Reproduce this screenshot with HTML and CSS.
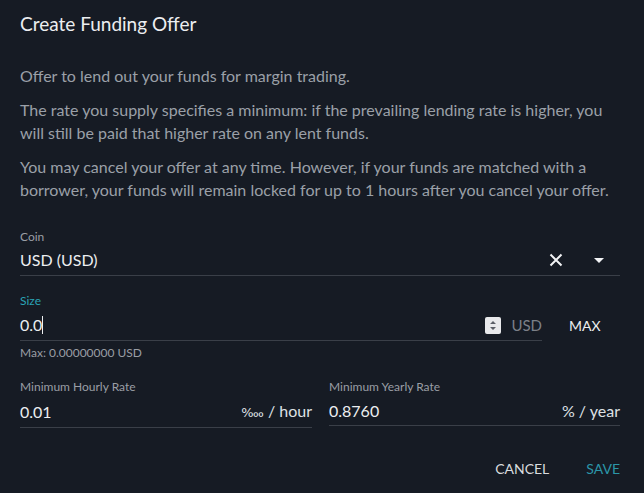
FILE: index.html
```html
<!DOCTYPE html>
<html>
<head>
<meta charset="utf-8">
<link rel="stylesheet" href="styles.css">
</head>
<body>
<div class="dialog">
  <h1 class="title">Create Funding Offer</h1>
  <div class="desc">
    <p>Offer to lend out your funds for margin trading.</p>
    <p>The rate you supply specifies a minimum: if the prevailing lending rate is higher, you will still be paid that higher rate on any lent funds.</p>
    <p>You may cancel your offer at any time. However, if your funds are matched with a borrower, your funds will remain locked for up to 1 hours after you cancel your offer.</p>
  </div>

  <div class="field coin">
    <div class="label">Coin</div>
    <div class="input">
      <span class="value">USD (USD)</span>
      <span class="icons">
        <svg class="clear" width="14" height="14" viewBox="0 0 14 14"><path d="M1.5 1.5L12.5 12.5M12.5 1.5L1.5 12.5" stroke="#f2f3f5" stroke-width="2" fill="none"/></svg>
        <svg class="caret" width="10" height="5" viewBox="0 0 10 5"><path d="M0 0H10L5 5Z" fill="#f2f3f5"/></svg>
      </span>
    </div>
  </div>

  <div class="size-row">
    <div class="field size">
      <div class="label active">Size</div>
      <div class="input">
        <span class="value">0.0<span class="cursor"></span></span>
        <span class="adorn">
          <svg class="spin" width="16" height="17" viewBox="0 0 16 17"><rect x="0" y="0" width="16" height="17" rx="2" fill="#e8e9eb"/><path d="M5 7L8 4L11 7Z M5 10L8 13L11 10Z" fill="#5a5e66"/></svg>
          <span class="unit">USD</span>
        </span>
      </div>
    </div>
    <button class="max">MAX</button>
  </div>
  <div class="hint">Max: 0.00000000 USD</div>

  <div class="rates">
    <div class="field">
      <div class="label">Minimum Hourly Rate</div>
      <div class="input">
        <span class="value">0.01</span>
        <span class="suffix"><span class="permyr">‱</span> / hour</span>
      </div>
    </div>
    <div class="field">
      <div class="label">Minimum Yearly Rate</div>
      <div class="input">
        <span class="value">0.8760</span>
        <span class="suffix">% / year</span>
      </div>
    </div>
  </div>

  <div class="actions">
    <button class="btn cancel">CANCEL</button>
    <button class="btn save">SAVE</button>
  </div>
</div>
</body>
</html>
```

FILE: styles.css
```css
html, body {
  margin: 0;
  padding: 0;
  background: #161b24;
  height: 100%;
}
body {
  font-family: Lato, "Noto Sans", sans-serif;
  color: #e6e8eb;
}
.dialog {
  padding: 12px 24px 0 20px;
}
.title {
  margin: 0;
  font-size: 19px;
  font-weight: 400;
  line-height: 24px;
  color: #eceef0;
}
.desc {
  margin-top: 28px;
}
.desc p {
  margin: 0 0 11px 0;
  font-size: 16px;
  line-height: 23px;
  color: #9ba0a8;
}
.desc p:last-child {
  margin-bottom: 0;
}
.field {
  display: flex;
  flex-direction: column;
}
.label {
  font-size: 12px;
  line-height: 16px;
  color: #9a9ea5;
}
.label.active {
  color: #2aa3b5;
}
.input {
  display: flex;
  align-items: center;
  justify-content: space-between;
  border-bottom: 1px solid #3a3f48;
  font-size: 16px;
  line-height: 22px;
  padding: 0 0 4px 0;
  color: #eceef0;
}
.coin {
  margin-top: 28px;
}
.coin .label {
  margin-bottom: 4px;
}
.icons {
  display: flex;
  align-items: center;
  gap: 31px;
  padding-right: 16px;
}
.size-row {
  display: flex;
  align-items: flex-end;
  margin-top: 17px;
}
.size {
  width: 522px;
}
.size .label {
  margin-bottom: 5px;
}
.cursor {
  display: inline-block;
  width: 1px;
  height: 18px;
  background: #eceef0;
  vertical-align: -3px;
}
.adorn {
  display: flex;
  align-items: center;
  gap: 10px;
}
.unit {
  color: #7c8088;
  font-size: 15px;
}
.max {
  margin-left: 27px;
  margin-bottom: 6px;
  background: none;
  border: none;
  padding: 0;
  font-family: Lato, "Noto Sans", sans-serif;
  font-size: 14px;
  line-height: 18px;
  color: #eceef0;
}
.hint {
  margin-top: 4px;
  font-size: 12px;
  line-height: 16px;
  color: #9a9ea5;
}
.rates {
  display: grid;
  grid-template-columns: 292px 291px;
  column-gap: 17px;
  margin-top: 18px;
}
.rates .label {
  margin-bottom: 5px;
}
.rates .input {
  padding-bottom: 3px;
}
.suffix {
  color: #dfe1e4;
}
.permyr {
  font-family: "DejaVu Sans", sans-serif;
  font-size: 13px;
}
.actions {
  display: flex;
  justify-content: flex-end;
  gap: 37px;
  margin-top: 32px;
}
.btn {
  background: none;
  border: none;
  padding: 0;
  font-family: Lato, "Noto Sans", sans-serif;
  font-size: 14px;
  line-height: 18px;
}
.cancel {
  color: #d9dcdf;
}
.save {
  color: #2b96a8;
}
```
